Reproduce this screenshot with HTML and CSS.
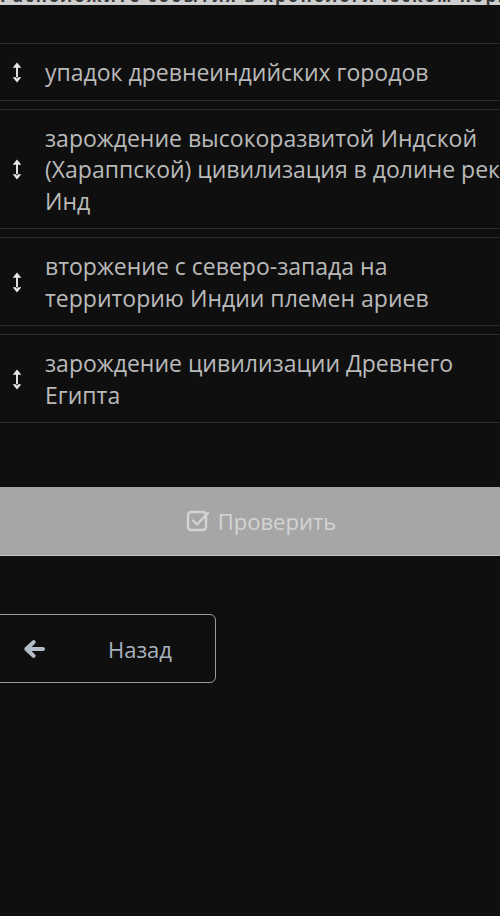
FILE: index.html
```html
<!DOCTYPE html>
<html lang="ru">
<head>
  <meta charset="UTF-8">
  <meta name="viewport" content="width=device-width, initial-scale=1.0">
  <title>Порядок событий</title>
  <link rel="stylesheet" href="styles.css">
</head>
<body>
  <div class="top-strip">
    <span class="top-strip-text">Расположите события в хронологическом порядке — перетащите элементы списка</span>
  </div>

  <ul class="order-list">
    <li class="order-item">
      <svg class="drag-icon" viewBox="0 0 10 22"><path d="M4 5h2v12H4z M5 0.5L9.5 6h-9z M5 21.5L9.5 16h-9z" /></svg>
      <span class="order-text">упадок древнеиндийских городов</span>
    </li>
    <li class="order-item">
      <svg class="drag-icon" viewBox="0 0 10 22"><path d="M4 5h2v12H4z M5 0.5L9.5 6h-9z M5 21.5L9.5 16h-9z" /></svg>
      <span class="order-text">зарождение высокоразвитой Индской (Хараппской) цивилизация в долине реки Инд</span>
    </li>
    <li class="order-item">
      <svg class="drag-icon" viewBox="0 0 10 22"><path d="M4 5h2v12H4z M5 0.5L9.5 6h-9z M5 21.5L9.5 16h-9z" /></svg>
      <span class="order-text">вторжение с северо-запада на территорию Индии племен ариев</span>
    </li>
    <li class="order-item">
      <svg class="drag-icon" viewBox="0 0 10 22"><path d="M4 5h2v12H4z M5 0.5L9.5 6h-9z M5 21.5L9.5 16h-9z" /></svg>
      <span class="order-text">зарождение цивилизации Древнего Египта</span>
    </li>
  </ul>

  <button class="check-button" disabled>
    <svg class="check-icon" viewBox="0 0 24 24">
      <rect x="2" y="3" width="18" height="18" rx="3" />
      <path d="M7 11.5l4 4L22 4" />
    </svg>
    Проверить
  </button>

  <button class="back-button">
    <svg class="back-icon" viewBox="0 0 24 20"><path d="M10.5 1.5a2 2 0 0 1 2.8 2.8L9.6 8H21a2 2 0 0 1 0 4H9.6l3.7 3.7a2 2 0 0 1-2.8 2.8L2.9 11.4a2 2 0 0 1 0-2.8z" /></svg>
    <span class="back-text">Назад</span>
  </button>
</body>
</html>
```

FILE: styles.css
```css
body {
  margin: 0;
  background-color: #0f0f0f;
  font-family: 'Open Sans', 'Noto Sans', sans-serif;
  color: #bcbcbc;
  overflow: hidden;
}

.top-strip {
  height: 5px;
  overflow: hidden;
  background-color: #cfcfcf;
  margin-bottom: 38px;
}

.top-strip-text {
  display: block;
  margin-top: -13px;
  font-size: 17px;
  font-weight: 700;
  line-height: 18px;
  color: #3a3a3a;
  white-space: nowrap;
  letter-spacing: 2px;
}

.order-list {
  list-style: none;
  margin: 0;
  padding: 0;
  display: flex;
  flex-direction: column;
  gap: 8px;
}

.order-item {
  display: flex;
  align-items: center;
  padding: 13px 0 11px 0;
  border-top: 1px solid #2c2c2c;
  border-bottom: 1px solid #2c2c2c;
}

.drag-icon {
  width: 10px;
  height: 21px;
  margin: 0 23px 0 12px;
  flex-shrink: 0;
  fill: #e8e8e8;
}

.order-text {
  font-size: 23px;
  line-height: 31.5px;
  color: #bababa;
  margin-right: -16px;
}

.check-button {
  display: flex;
  align-items: center;
  justify-content: center;
  gap: 8px;
  width: 100%;
  height: 69px;
  margin-top: 64px;
  padding: 0 0 0 22px;
  border: none;
  border-bottom: 1px solid #c4c4c4;
  background-color: #a6a6a6;
  color: #d4d4d4;
  font-family: 'Open Sans', 'Noto Sans', sans-serif;
  font-size: 22px;
}

.check-icon {
  width: 24px;
  height: 24px;
  fill: none;
  stroke: #d4d4d4;
  stroke-width: 2.4;
  stroke-linecap: round;
  stroke-linejoin: round;
}

.back-button {
  display: flex;
  align-items: center;
  width: 228px;
  height: 69px;
  margin: 58px 0 0 -12px;
  padding: 0 0 0 33px;
  border: 1.5px solid #9a9a9a;
  border-radius: 6px;
  background-color: transparent;
  font-family: 'Open Sans', 'Noto Sans', sans-serif;
}

.back-icon {
  width: 24px;
  height: 20px;
  fill: #b3bcc7;
}

.back-text {
  margin-left: 62px;
  font-size: 22px;
  color: #a9b2bc;
}
```
